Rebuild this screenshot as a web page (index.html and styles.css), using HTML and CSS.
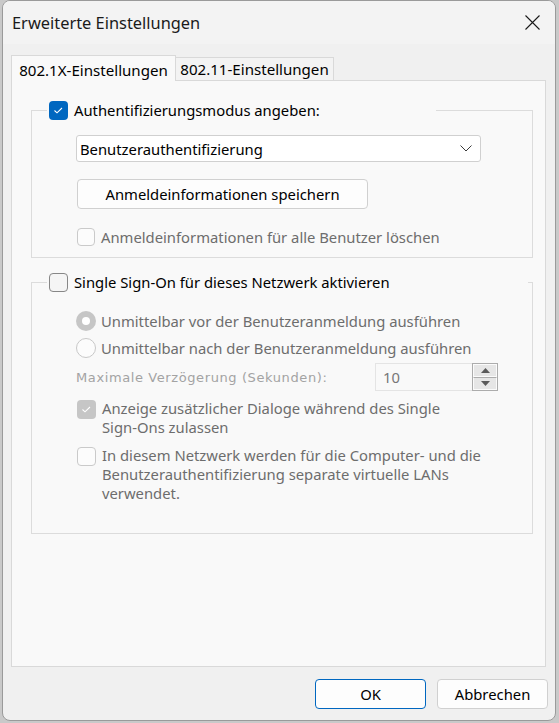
FILE: index.html
```html
<!DOCTYPE html>
<html lang="de">
<head>
<meta charset="utf-8">
<title>Erweiterte Einstellungen</title>
<link rel="stylesheet" href="styles.css">
</head>
<body>
<div class="dialog">
  <div class="titlebar">
    <span class="title">Erweiterte Einstellungen</span>
    <span class="close">
      <svg width="15" height="15" viewBox="0 0 15 15"><path d="M0.5 0.5 L14.5 14.5 M14.5 0.5 L0.5 14.5" stroke="#1a1a1a" stroke-width="1.1" fill="none"/></svg>
    </span>
  </div>
  <div class="main">
    <div class="tabs">
      <div class="tab active">802.1X-Einstellungen</div>
      <div class="tab inactive">802.11-Einstellungen</div>
    </div>
    <div class="panel">
      <fieldset class="group g1">
        <legend class="legend l1">
          <span class="cb on"><svg width="19" height="19" viewBox="0 0 19 19"><path d="M5.5 9.5 L8 11.8 L13 7" stroke="#fff" stroke-width="1.1" fill="none"/></svg></span>
          <span class="ltext">Authentifizierungsmodus angeben:</span>
        </legend>
        <div class="select">
          <span>Benutzerauthentifizierung</span>
          <svg width="12" height="7" viewBox="0 0 12 7"><path d="M0.5 0.5 L6 6 L11.5 0.5" stroke="#3a3a3a" stroke-width="1" fill="none"/></svg>
        </div>
        <button class="btn save">Anmeldeinformationen speichern</button>
        <div class="row dis r-clear">
          <span class="cb dis-off"></span>
          <span>Anmeldeinformationen für alle Benutzer löschen</span>
        </div>
      </fieldset>

      <fieldset class="group g2">
        <legend class="legend l2">
          <span class="cb off"></span>
          <span class="ltext">Single Sign-On für dieses Netzwerk aktivieren</span>
        </legend>
        <div class="row dis r-radio1">
          <span class="radio sel"><span class="dot"></span></span>
          <span>Unmittelbar vor der Benutzeranmeldung ausführen</span>
        </div>
        <div class="row dis r-radio2">
          <span class="radio"></span>
          <span>Unmittelbar nach der Benutzeranmeldung ausführen</span>
        </div>
        <div class="delay">
          <span class="dlabel">Maximale Verzögerung (Sekunden):</span>
          <div class="spin">
            <span class="spinval">10</span>
            <div class="spinbtns">
              <span class="sb"><svg width="9" height="5" viewBox="0 0 9 5"><path d="M0 5 L4.5 0 L9 5 Z" fill="#5a5a5a"/></svg></span>
              <span class="sb"><svg width="9" height="5" viewBox="0 0 9 5"><path d="M0 0 L4.5 5 L9 0 Z" fill="#5a5a5a"/></svg></span>
            </div>
          </div>
        </div>
        <div class="row dis multi r-dialogs">
          <span class="cb dis-on"><svg width="19" height="19" viewBox="0 0 19 19"><path d="M5.5 9.5 L8 11.8 L13 7" stroke="#fff" stroke-width="1.1" fill="none"/></svg></span>
          <span class="mtext">Anzeige zusätzlicher Dialoge während des Single<br>Sign-Ons zulassen</span>
        </div>
        <div class="row dis multi r-vlan">
          <span class="cb dis-off"></span>
          <span class="mtext">In diesem Netzwerk werden für die Computer- und die<br>Benutzerauthentifizierung separate virtuelle LANs<br>verwendet.</span>
        </div>
      </fieldset>
    </div>
    <div class="footer">
      <button class="btn ok">OK</button>
      <button class="btn">Abbrechen</button>
    </div>
  </div>
</div>
</body>
</html>
```

FILE: styles.css
```css
html, body {
  margin: 0;
  padding: 0;
}
body {
  background: #c9c9c9;
  font-family: "Noto Sans", "Open Sans", sans-serif;
  font-size: 14.8px;
  color: #1a1a1a;
}
.dialog {
  margin-left: 2px;
  width: 554px;
  height: 721px;
  box-sizing: border-box;
  border: 1px solid #9a9a9a;
  border-radius: 8px;
  background: #f0f0f0;
  overflow: hidden;
  display: flex;
  flex-direction: column;
}
.titlebar {
  flex: none;
  height: 43px;
  background: #f3f3f3;
  display: flex;
  align-items: center;
  justify-content: space-between;
}
.title {
  margin-left: 9px;
  font-size: 16.4px;
  color: #1a1a1a;
}
.close {
  width: 46px;
  height: 43px;
  display: flex;
  align-items: center;
  justify-content: center;
}
.main {
  padding: 11px 9px 0 8px;
  display: flex;
  flex-direction: column;
}
.tabs {
  display: flex;
  align-items: flex-end;
}
.tab {
  box-sizing: border-box;
  border: 1px solid #d9d9d9;
  border-bottom: none;
  display: flex;
  align-items: center;
  justify-content: center;
  font-size: 15.1px;
  color: #000;
  white-space: nowrap;
}
.tab.active {
  width: 165px;
  height: 26px;
  margin-bottom: -1px;
  padding-top: 2px;
  background: #f9f9f9;
  position: relative;
  z-index: 1;
}
.tab.inactive {
  width: 158px;
  height: 23px;
  border-left: none;
  background: #f3f3f3;
}
.panel {
  height: 587px;
  box-sizing: border-box;
  border: 1px solid #d9d9d9;
  background: #f9f9f9;
  padding: 19px 0 0 19px;
}
.group {
  margin: 0;
  padding: 0;
  border: 1px solid #dcdcdc;
  width: 502px;
  box-sizing: border-box;
  min-inline-size: 0;
}
.g1 { padding-bottom: 11px; }
.g2 { margin-top: 14px; padding-bottom: 30px; }
.legend {
  margin-left: 15px;
  padding: 0 0 0 2px;
  height: 20px;
  box-sizing: border-box;
  display: flex;
  align-items: center;
  white-space: nowrap;
}
.l1 { width: 389px; }
.l2 { width: 481px; }
.ltext {
  color: #000;
}
.cb {
  flex: none;
  width: 19px;
  height: 19px;
  box-sizing: border-box;
  border-radius: 4px;
  margin-right: 6px;
  display: flex;
}
.cb.on { background: #0067c0; }
.cb.off { border: 1px solid #878787; background: #f5f5f5; }
.cb.dis-on { background: #c6c6c6; }
.cb.dis-off { border: 1px solid #cacaca; background: #fcfcfc; }

.select {
  margin: 15px 0 0 44px;
  width: 405px;
  height: 27px;
  box-sizing: border-box;
  border: 1px solid #d0d0d0;
  border-radius: 3px;
  background: #fff;
  display: flex;
  align-items: center;
  justify-content: space-between;
  padding: 0 8px 0 3px;
  color: #000;
}
.btn {
  font-family: inherit;
  font-size: 14.8px;
  color: #000;
  background: #fdfdfd;
  border: 1px solid #d0d0d0;
  border-radius: 4px;
  height: 30px;
  box-sizing: border-box;
  padding: 0;
}
.save {
  display: block;
  margin: 17px 0 0 45px;
  width: 291px;
}
.row {
  display: flex;
  align-items: center;
  white-space: nowrap;
}
.dis { color: #6d6d6d; }
.r-clear { margin: 18px 0 0 45px; height: 19px; }
.r-clear .cb { width: 18px; height: 18px; }

.radio {
  flex: none;
  width: 20px;
  height: 20px;
  box-sizing: border-box;
  border-radius: 50%;
  border: 1px solid #c8c8c8;
  background: #fcfcfc;
  margin-right: 5px;
  display: flex;
  align-items: center;
  justify-content: center;
}
.radio.sel {
  border: none;
  background: #c6c6c6;
}
.dot {
  width: 8px;
  height: 8px;
  border-radius: 50%;
  background: #fff;
}
.r-radio1 { margin: 19px 0 0 44px; height: 20px; }
.r-radio2 { margin: 7px 0 0 44px; height: 20px; }

.delay {
  margin: 5px 0 0 44px;
  height: 28px;
  display: flex;
  align-items: center;
}
.dlabel {
  font-family: "DejaVu Sans", sans-serif;
  font-size: 13px;
  letter-spacing: 0.6px;
  color: #a3a3a3;
  width: 299px;
  white-space: nowrap;
}
.spin {
  display: flex;
  height: 28px;
}
.spinval {
  width: 97px;
  height: 28px;
  box-sizing: border-box;
  border: 1px solid #e4e4e4;
  border-right: none;
  background: #f9f9f9;
  color: #777;
  padding-left: 7px;
  display: flex;
  align-items: center;
}
.spinbtns {
  width: 26px;
  height: 28px;
  box-sizing: border-box;
  border: 1px solid #acacac;
  display: flex;
  flex-direction: column;
}
.sb {
  flex: 1;
  box-sizing: border-box;
  border: 1px solid #fbfbfb;
  background: #e6e6e6;
  display: flex;
  align-items: center;
  justify-content: center;
}
.sb + .sb { border-top: 1px solid #acacac; }

.multi { align-items: flex-start; }
.mtext { line-height: 19px; margin-top: -1px; }
.r-dialogs { margin: 9px 0 0 45px; }
.r-vlan { margin: 10px 0 0 45px; }

.footer {
  display: flex;
  justify-content: flex-end;
  gap: 11px;
  margin: 12px -2px 0 0;
}
.footer .btn {
  width: 111px;
}
.footer .ok {
  border-color: #0067c0;
}
```
